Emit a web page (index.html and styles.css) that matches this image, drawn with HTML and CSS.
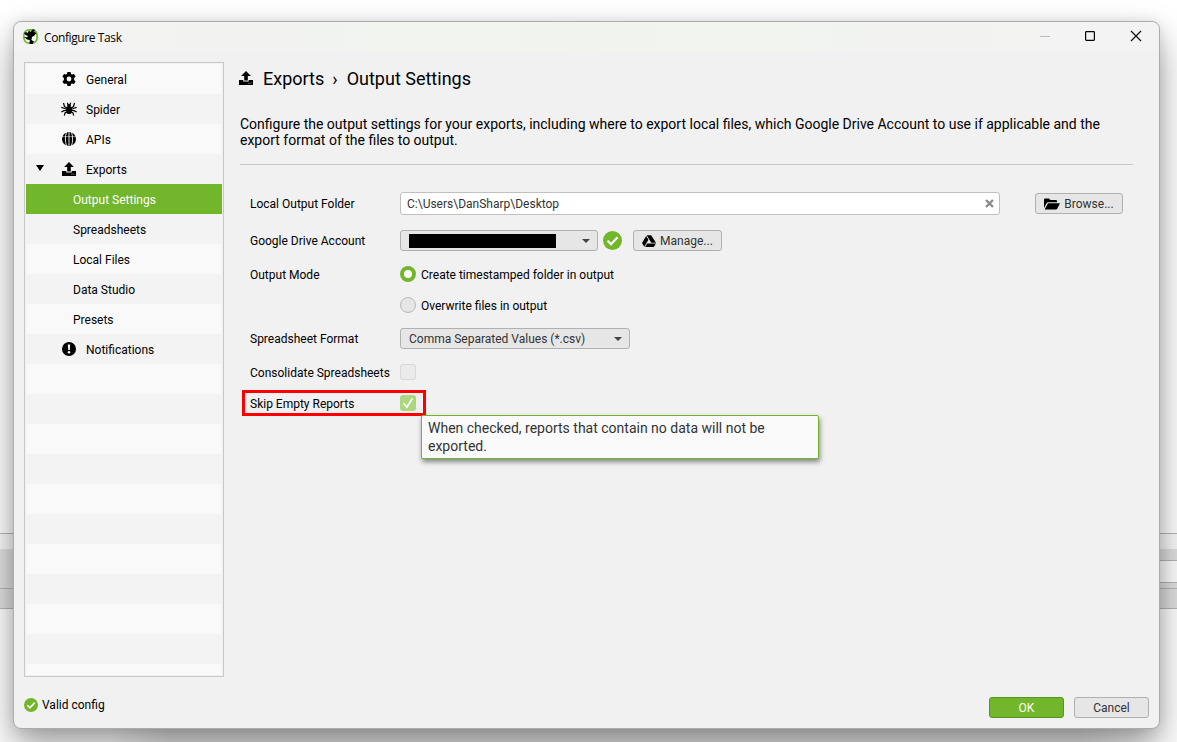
FILE: index.html
```
<!DOCTYPE html>
<html lang="en">
<head>
<meta charset="utf-8">
<title>Configure Task</title>
<link rel="stylesheet" href="styles.css">
</head>

<body>

<svg class="symbols" width="0" height="0">
	<symbol id="upload" viewBox="0 0 14 14">
		<path d="M7 0l4.9 4.9H8.8v4.6H5.2V4.9H2.1z"/>
		<path d="M0 9h4.3v1.4h5.4V9H14v5H0z"/>
		<path d="M9.4 12.2h1M11.4 12.2h1" stroke="#ccc" stroke-width=".8"/>
	</symbol>
	<symbol id="check" viewBox="0 0 18 18">
		<circle cx="9" cy="9" r="9" fill="#72b62b"/>
		<path d="M4.3 9.3l3.3 3.2 6.2-6.5" fill="none" stroke="#fff" stroke-width="2.1"/>
	</symbol>
</svg>

<div class="backdrop">
	<div class="side side-left">
		<div class="bar bar-light"></div>
		<div class="bar bar-tall"></div>
		<div class="bar bar-low"></div>
	</div>
	<div class="side side-right">
		<div class="bar bar-light"></div>
		<div class="bar bar-short"></div>
		<div class="bar bar-field"></div>
		<div class="bar bar-thin"></div>
		<div class="bar bar-low"></div>
	</div>
</div>

<div class="window">
	<div class="titlebar">
		<svg class="logo" width="15" height="15" viewBox="0 0 15 15">
			<rect x=".9" y=".9" width="13.2" height="13.2" rx="5" fill="#f4f8ee" stroke="#72b62b" stroke-width="1.6"/>
			<path d="M1 4l2-1 1.5 1L6 1.5 7.5 3 10 0l2 1-1 2 2.5 1-2 2.5L9 8l-.6 3 2.6 1.5L9.5 15h-3L6.8 11 4 10.5 1 8l3 .3L5 7 2.5 6z"/>
		</svg>
		<span class="caption">Configure Task</span>
		<svg class="controls" width="106" height="12" viewBox="0 0 106 12" fill="none">
			<path d="M1 6.5h10" stroke="#bbb"/>
			<rect x="46.6" y="1.6" width="8.8" height="8.8" rx=".8" stroke="#000" stroke-width="1.2"/>
			<path d="M92 1l10 10M102 1L92 11" stroke="#111" stroke-width="1.2"/>
		</svg>
	</div>

	<div class="columns">
		<ul class="sidebar">
			<li>
				<svg class="icon" width="14" height="14" viewBox="0 0 14 14"><path fill-rule="evenodd" d="M5.4 0h3.2l.4 2 1 .5L12 1.9l1.6 2.7L12.1 6v2l1.5 1.4L12 12.1l-2-.6-1 .5-.4 2H5.4L5 12l-1-.5-2 .6L.4 9.4 1.9 8V6L.4 4.6 2 1.9l2 .6L5 2zM7 4.6a2.4 2.4 0 1 0 0 4.8 2.4 2.4 0 0 0 0-4.8z"/></svg>
				<span>General</span>
			</li>
			<li>
				<svg class="icon wide" width="16" height="14" viewBox="0 0 16 14"><ellipse cx="8" cy="8.2" rx="3" ry="3.9"/><circle cx="8" cy="3.8" r="1.9"/><path d="M6 6L3.5 4.5 2.5 1M6 7.5L3 6.2.3 5.4M6 8.5l-3 .2L.3 10M6.3 9.8L4 11l-.7 2.7M10 6l2.5-1.5 1-3.5M10 7.5l3-1.3 2.7-.8M10 8.5l3 .2 2.7 1.3M9.7 9.8L12 11l.7 2.7M7.2 3L6.3.8M8.8 3L9.7.8" fill="none" stroke="#000" stroke-width="1.2"/></svg>
				<span>Spider</span>
			</li>
			<li>
				<svg class="icon" width="14" height="14" viewBox="0 0 14 14"><circle cx="7" cy="7" r="7"/><path d="M4.6 0C3 4 3 10 4.6 14M9.4 0c1.6 4 1.6 10 0 14M7 0v14" fill="none" stroke="#f9f9f9" stroke-width=".9"/><path d="M0 4.6h14" stroke="#f9f9f9" stroke-width=".5"/></svg>
				<span>APIs</span>
			</li>
			<li class="open">
				<svg class="icon" width="14" height="14"><use href="#upload"/></svg>
				<span>Exports</span>
			</li>
			<li class="child selected"><span>Output Settings</span></li>
			<li class="child"><span>Spreadsheets</span></li>
			<li class="child"><span>Local Files</span></li>
			<li class="child"><span>Data Studio</span></li>
			<li class="child"><span>Presets</span></li>
			<li>
				<svg class="icon" width="14" height="14" viewBox="0 0 14 14"><circle cx="7" cy="7" r="7"/><path d="M5.8 2.6h2.4L7.8 8H6.2z" fill="#f3f3f3"/><circle cx="7" cy="10.2" r="1.3" fill="#f3f3f3"/></svg>
				<span>Notifications</span>
			</li>
		</ul>

		<div class="main">
			<div class="heading">
				<svg width="14" height="14"><use href="#upload"/></svg>
				<span class="crumb">Exports</span>
				<span class="sep">›</span>
				<span class="page">Output Settings</span>
			</div>
			<p class="intro">Configure the output settings for your exports, including where to export local files, which Google Drive Account to use if applicable and the<br>export format of the files to output.</p>

			<div class="form">
				<div class="row row-folder">
					<label>Local Output Folder</label>
					<div class="input">
						<span>C:\Users\DanSharp\Desktop</span>
						<svg width="9" height="9" viewBox="0 0 9 9"><path d="M1 1l7 7M8 1L1 8" stroke="#8c8c8c" stroke-width="2.4"/></svg>
					</div>
					<div class="button browse">
						<svg width="16" height="12" viewBox="0 0 16 12"><path d="M0 10V1.5Q0 .5 1 .5h4L6.5 2H12q1 0 1 1v1.2H4.2Q3.2 4.2 2.7 5z"/><path d="M.7 11.5L3.5 6q.4-.8 1.2-.8H16l-2.8 5.6q-.4.7-1.2.7z"/></svg>
						<span>Browse...</span>
					</div>
				</div>
				<div class="row row-drive">
					<label>Google Drive Account</label>
					<div class="select account">
						<div class="redacted"></div>
						<i class="arrow"></i>
					</div>
					<svg class="valid" width="19" height="19"><use href="#check"/></svg>
					<div class="button manage">
						<svg width="14" height="12" viewBox="0 0 14 12"><path d="M4.7.2h4.4L14 7.8H9.3zM4.2.9L6.4 4.7 2.3 11.8 0 8zM5.2 8.5H14L11.8 12H3.2z"/></svg>
						<span>Manage...</span>
					</div>
				</div>
				<div class="row row-mode">
					<label>Output Mode</label>
					<i class="radio on"></i>
					<span class="option">Create timestamped folder in output</span>
				</div>
				<div class="row row-overwrite">
					<label></label>
					<i class="radio"></i>
					<span class="option">Overwrite files in output</span>
				</div>
				<div class="row row-format">
					<label>Spreadsheet Format</label>
					<div class="select format">
						<span>Comma Separated Values (*.csv)</span>
						<i class="arrow"></i>
					</div>
				</div>
				<div class="row row-consolidate">
					<label>Consolidate Spreadsheets</label>
					<i class="checkbox"></i>
				</div>
				<div class="row row-skip">
					<label>Skip Empty Reports</label>
					<i class="checkbox checked"><svg width="16" height="16" viewBox="0 0 16 16"><path d="M3.6 8.2l3.2 4L12.4 3.5" fill="none" stroke="#fff" stroke-width="1.7"/></svg></i>
					<div class="tooltip">When checked, reports that contain no data will not be exported.</div>
				</div>
			</div>
		</div>
	</div>

	<div class="footer">
		<div class="status">
			<svg width="14" height="14"><use href="#check"/></svg>
			<span>Valid config</span>
		</div>
		<div class="button ok">OK</div>
		<div class="button cancel">Cancel</div>
	</div>
</div>

</body>
</html>
```
FILE: styles.css
```
*, *::before {
	box-sizing: border-box;
}

html {
	font-family: Roboto, sans-serif;
	font-size: 12px;
}

body {
	background-color: #fff;
	color: #000;
	height: 742px;
	margin: 0;
	overflow: hidden;
	padding: 21px 0 0 13px;
	position: relative;
	width: 1177px;
}

.symbols {
	position: absolute;
}

svg {
	display: block;
	flex-shrink: 0;
}

/* application behind the dialog */
.backdrop {
	background: linear-gradient(90deg, transparent 110px, #e4e4e4 170px, #e4e4e4 1080px, transparent 1160px) bottom / 100% 30px no-repeat;
	display: flex;
	inset: 0;
	justify-content: space-between;
	padding-top: 533px;
	position: absolute;
}

.side {
	border-bottom: 1px solid #b8b8b8;
	height: 76px;
	width: 60px;
}

.bar {
	border-top: 1px solid #b8b8b8;
}

.bar-light {
	background-color: #fafafa;
	height: 16px;
}

.bar-tall {
	background-color: #e2e2e2;
	border: 0;
	height: 39px;
}

.bar-short {
	background-color: #e0e0e0;
	border: 0;
	height: 11px;
}

.bar-field {
	background-color: #fff;
	height: 22px;
}

.bar-thin {
	background-color: #e2e2e2;
	height: 6px;
}

.bar-low {
	background-color: #e0e0e0;
	height: 20px;
}

.window {
	background-color: #f1f1f1;
	border: 1px solid #acacac;
	border-radius: 8px;
	box-shadow: 0 18px 36px rgba(0, 0, 0, .38), 0 0 12px rgba(0, 0, 0, .1);
	display: flex;
	flex-direction: column;
	height: 708px;
	position: relative;
	width: 1147px;
}

.titlebar {
	align-items: center;
	background: linear-gradient(90deg, #f3f3f3, #f1f4ee 50%, #f3f3f3);
	border-radius: 8px 8px 0 0;
	display: flex;
	height: 29px;
	padding: 0 14px 0 9px;
}

.logo, .controls {
	margin-bottom: 1px;
}

.caption {
	flex: 1;
	font-family: "Open Sans", sans-serif;
	letter-spacing: -.4px;
	margin-left: 6px;
	padding-top: 1px;
}

.columns {
	display: flex;
	height: 626px;
	padding: 11px 26px 0 10px;
}

.sidebar {
	background: repeating-linear-gradient(#f9f9f9 0 30px, #f3f3f3 30px 60px) content-box #fafafa;
	border: 1px solid #c8c8c8;
	height: 615px;
	list-style-type: none;
	margin: 0;
	padding: 1px;
	width: 200px;
}

.sidebar li {
	align-items: center;
	display: flex;
	height: 30px;
	padding: 2px 0 0 60px;
	position: relative;
}

.sidebar .icon {
	left: 36px;
	position: absolute;
	top: 8px;
}

.sidebar .wide {
	left: 35px;
}

.sidebar .child {
	padding-left: 47px;
}

.sidebar .selected {
	background-color: #72b62b;
	color: #fff;
}

.open::before {
	border: 4px solid transparent;
	border-bottom: 0;
	border-top: 6px solid #000;
	content: "";
	left: 10px;
	position: absolute;
	top: 11px;
}

.main {
	flex: 1;
	padding-left: 16px;
}

.heading {
	align-items: center;
	display: flex;
	font-size: 18px;
	height: 32px;
	margin-left: -1px;
}

.crumb {
	margin-left: 10px;
}

.sep {
	margin: 0 9px 0 8px;
}

.intro {
	border-bottom: 1px solid #c8c8c8;
	font-size: 14px;
	height: 71px;
	line-height: 16px;
	margin: 0;
	padding-top: 22px;
	white-space: nowrap;
}

.form {
	padding: 22px 10px 0;
}

.row {
	align-items: center;
	display: flex;
	position: relative;
}

.row label {
	width: 150px;
}

.row-folder { height: 33px; }
.row-drive { height: 41px; }
.row-mode { height: 27px; }
.row-overwrite { height: 35px; }
.row-format { height: 31px; }
.row-consolidate { height: 37px; }
.row-skip { height: 25px; }

.input {
	align-items: center;
	background-color: #fff;
	border: 1px solid #c0c0c0;
	border-radius: 3px;
	color: #333;
	display: flex;
	height: 23px;
	justify-content: space-between;
	padding: 0 5px 0 6px;
	width: 600px;
}

.button, .select {
	align-items: center;
	background-color: #e6e6e6;
	border: 1px solid #b0b0b0;
	border-radius: 3px;
	color: #333;
	display: flex;
	height: 21px;
}

.button {
	justify-content: center;
}

.button svg {
	margin-right: 4px;
}

.browse {
	margin-left: 35px;
	width: 88px;
}

.select {
	justify-content: space-between;
	padding: 0 7px 0 8px;
}

.account {
	width: 198px;
}

.redacted {
	background-color: #000;
	height: 14px;
	width: 147px;
}

.format {
	width: 230px;
}

.arrow {
	border: 4px solid transparent;
	border-bottom: 0;
	border-top-color: #444;
}

.valid {
	margin-left: 5px;
}

.manage {
	margin-left: 11px;
	width: 89px;
}

.radio, .checkbox {
	height: 16px;
	margin-bottom: 1px;
	width: 16px;
}

.radio {
	background-color: #e6e6e6;
	border: 1px solid #b8b8b8;
	border-radius: 50%;
}

.radio.on {
	background-color: #fff;
	border: 4px solid #72b62b;
}

.option {
	margin-left: 5px;
}

.checkbox {
	background-color: #ebebeb;
	border: 1px solid #d8d8d8;
	border-radius: 3px;
}

.checked {
	background-color: #acd680;
	border: 0;
}

/* highlight around the option */
.row-skip::before {
	border: 3px solid #f00;
	content: "";
	height: 26px;
	left: -8px;
	position: absolute;
	top: -1px;
	width: 184px;
}

.tooltip {
	background-color: #fafafa;
	border: 1px solid #72b62b;
	border-radius: 2px;
	box-shadow: 1px 3px 5px rgba(0, 0, 0, .45);
	color: #333;
	font-size: 14px;
	height: 44px;
	left: 171px;
	line-height: 18px;
	padding: 3px 6px;
	position: absolute;
	top: 24px;
	width: 398px;
}

.footer {
	align-items: center;
	display: flex;
	padding: 20px 10px 0;
}

.status {
	align-items: center;
	display: flex;
	flex: 1;
	gap: 4px;
	margin-top: -5px;
}

.ok {
	background-color: #72b62b;
	border-color: #5a9420;
	color: #fff;
	width: 75px;
}

.cancel {
	margin-left: 10px;
	width: 75px;
}
```
